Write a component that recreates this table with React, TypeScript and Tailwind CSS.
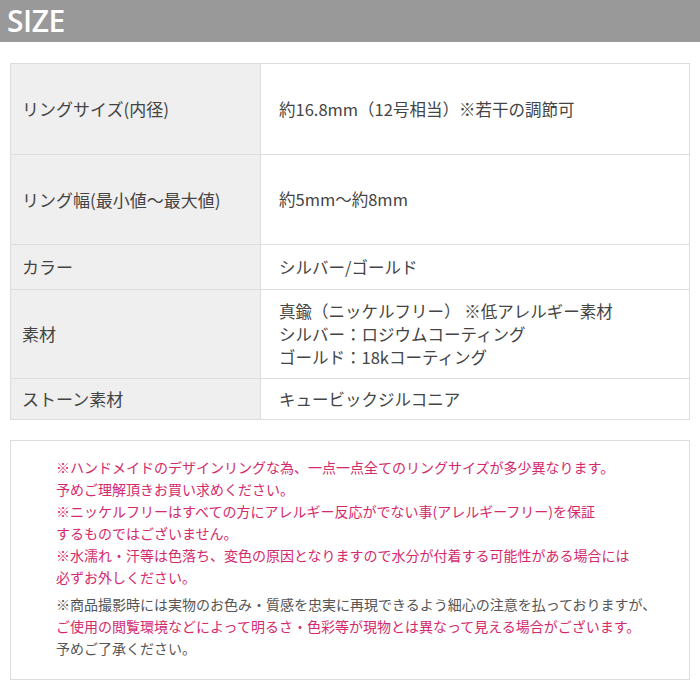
import React from "react";

const rows = [
  { label: "リングサイズ(内径)", value: ["約16.8mm（12号相当）※若干の調節可"], h: "h-[90px]" },
  { label: "リング幅(最小値〜最大値)", value: ["約5mm〜約8mm"], h: "h-[90px]" },
  { label: "カラー", value: ["シルバー/ゴールド"], h: "h-[45px]" },
  {
    label: "素材",
    value: [
      "真鍮（ニッケルフリー） ※低アレルギー素材",
      "シルバー：ロジウムコーティング",
      "ゴールド：18kコーティング",
    ],
    h: "h-[89px]",
  },
  { label: "ストーン素材", value: ["キュービックジルコニア"], h: "h-[41px]" },
];

const App = () => {
  return (
    <div
      className="w-[700px] h-[700px] bg-white text-[#333]"
      style={{ fontFamily: '"Noto Sans CJK JP", "Noto Sans", sans-serif' }}
    >
      {/* Header */}
      <div className="h-[42px] bg-[#999999] flex items-center px-[7px]">
        <span
          className="text-white text-[30px] font-semibold leading-none tracking-[-0.5px]"
          style={{ fontFamily: '"Open Sans", "Noto Sans", sans-serif' }}
        >
          SIZE
        </span>
      </div>

      {/* Spec table */}
      <div className="mt-[21px] mx-[10px] border border-[#dddddd]">
        {rows.map((row, i) => (
          <div
            key={i}
            className={`flex ${row.h} ${i > 0 ? "border-t border-[#dddddd]" : ""}`}
          >
            <div className="w-[250px] shrink-0 bg-[#efefef] border-r border-[#dddddd] flex items-center pl-[11px] text-[17px] text-[#444]">
              {row.label}
            </div>
            <div className="flex flex-col justify-center pl-[18px] text-[16.5px] leading-[23px] text-[#444]">
              {row.value.map((v, j) => (
                <div key={j}>{v}</div>
              ))}
            </div>
          </div>
        ))}
      </div>

      {/* Notes */}
      <div className="mt-[20px] mx-[10px] h-[240px] border border-[#dddddd] pl-[45px] pt-[15px] text-[14px] leading-[22px]">
        <div className="text-[#d42a6c]">
          <div>※ハンドメイドのデザインリングな為、一点一点全てのリングサイズが多少異なります。</div>
          <div>予めご理解頂きお買い求めください。</div>
          <div>※ニッケルフリーはすべての方にアレルギー反応がでない事(アレルギーフリー)を保証</div>
          <div>するものではございません。</div>
          <div>※水濡れ・汗等は色落ち、変色の原因となりますので水分が付着する可能性がある場合には</div>
          <div>必ずお外しください。</div>
        </div>
        <div className="mt-[5px]">
          <div className="text-[#555]">
            ※商品撮影時には実物のお色み・質感を忠実に再現できるよう細心の注意を払っておりますが、
          </div>
          <div className="text-[#d42a6c]">
            ご使用の閲覧環境などによって明るさ・色彩等が現物とは異なって見える場合がございます。
          </div>
          <div className="text-[#555]">予めご了承ください。</div>
        </div>
      </div>
    </div>
  );
};

export default App;
